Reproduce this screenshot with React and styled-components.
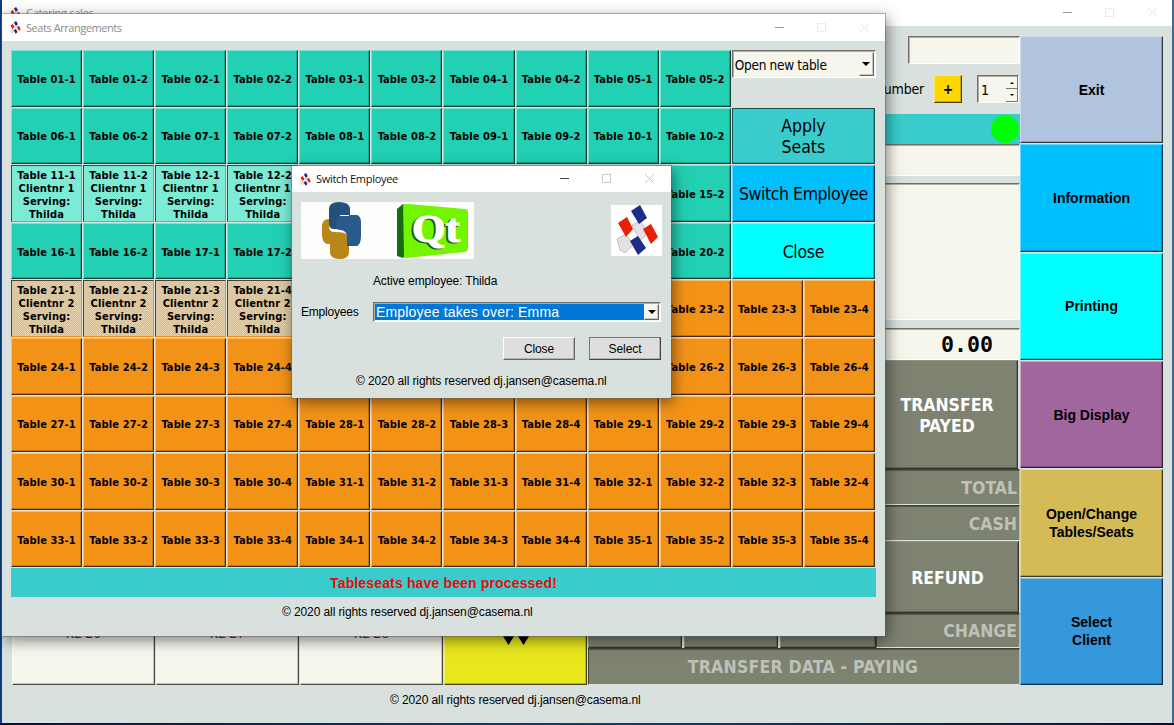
import React from "react";
import styled, { createGlobalStyle, css } from "styled-components";

const Global = createGlobalStyle`
  * { box-sizing: border-box; }
  body { margin: 0; overflow: hidden; font-family: "Liberation Sans", Arial, sans-serif; color: #000; }
`;

const tahoma = `"DejaVu Sans Condensed", "DejaVu Sans", sans-serif`;

const Desktop = styled.div`
  position: relative;
  width: 1174px;
  height: 725px;
  overflow: hidden;
  background: linear-gradient(90deg, #0a3f8c 0, #123a6c 2px, #073a66 60%, #3e6d93 100%);
  &::after {
    content: "";
    position: absolute;
    left: 0;
    right: 0;
    bottom: 0;
    height: 2px;
    background: linear-gradient(90deg, #07103c, #0a4474 50%, #06103a);
  }
`;

const Window = styled.section`
  position: absolute;
  left: ${(p) => p.$x}px;
  top: ${(p) => p.$y}px;
  width: ${(p) => p.$w}px;
  height: ${(p) => p.$h}px;
  display: flex;
  flex-direction: column;
  background: #d8e1de;
  box-shadow: ${(p) => (p.$shadow ? "0 0 0 1px rgba(90,100,100,.45), 2px 4px 14px rgba(0,0,0,.5)" : "none")};
`;

const TitleBar = styled.header`
  height: ${(p) => p.$h}px;
  flex: none;
  display: flex;
  align-items: center;
  padding: 0 ${(p) => p.$right}px 0 7px;
  gap: 4px;
  background: #fff;
  color: ${(p) => (p.$active ? "#111" : "#8b8b8b")};
  font: 11px/14px "Open Sans", "Noto Sans", sans-serif;
`;

const TitleText = styled.span`
  flex: 1;
  letter-spacing: ${(p) => p.$ls || 0}px;
  white-space: nowrap;
`;

const Controls = styled.svg`
  width: 98px;
  height: 12px;
  fill: none;
`;

function WindowControls({ active }) {
  return (
    <Controls viewBox="0 0 98 12">
      <path d="M1 5.5h9" stroke={active ? "#444" : "#999"} />
      <rect x="43.5" y="1.5" width="8" height="8" stroke={active ? "#ccc" : "#eaeaea"} />
      <path d="M86 1l9 9M95 1l-9 9" stroke={active ? "#ccc" : "#e4e4e4"} />
    </Controls>
  );
}

const Tiles = styled.svg`
  width: ${(p) => p.$size}px;
  height: ${(p) => p.$size}px;
  flex: none;
  display: block;
  background: #fff;
`;

function TileLogo({ size }) {
  return (
    <Tiles $size={size} viewBox={size < 20 ? "5 0 43 51" : "0 0 51 51"}>
      <g stroke="#8f9298" strokeWidth=".5">
        <path fill="#e2e2e5" d="M21 20l8-4 8 12-8 8z" />
        <path fill="#e2e2e5" d="M6 34l9-5 7 11-8 8-5-3z" />
      </g>
      <path fill="#1c2c8c" d="M20 6l9-6 7 13-8 6z" />
      <path fill="#e81e05" d="M7 18l9-6 6 12-7 8z" />
      <path fill="#e81e05" d="M32 24l8-5 7 13-7 7z" />
      <path fill="#1c2c8c" d="M19 36l8-5 8 12-8 7z" />
    </Tiles>
  );
}

const bevel = css`
  border: 1px solid;
  border-color: rgba(255, 255, 255, 0.4) rgba(0, 0, 0, 0.7) rgba(0, 0, 0, 0.7) rgba(255, 255, 255, 0.4);
  box-shadow: inset -1px -1px 0 rgba(0, 0, 0, 0.2);
`;

const sunken = css`
  border: 1px solid;
  border-color: #716e69 #fff #fff #716e69;
  box-shadow: inset 1px 1px 0 rgba(40, 40, 40, 0.35);
`;

const Button = styled.button`
  ${bevel}
  display: flex;
  align-items: center;
  justify-content: center;
  margin: 0;
  padding: 0;
  color: ${(p) => p.$fg || "#000"};
  background: ${(p) => p.$bg};
  white-space: pre-line;
  text-align: center;
  overflow: hidden;
`;

/* Main window */

const MainBody = styled.div`
  display: flex;
  height: 649px;
  margin: 10px 9px 0;
`;

const Products = styled.div`
  width: 577px;
  display: grid;
  grid-template-columns: repeat(4, 144px);
  grid-template-rows: repeat(6, 108.2px);
`;

const Product = styled(Button)`
  margin: 0 0 0 1px;
  padding-top: 3px;
  font: 14px ${tahoma};
  color: #444;
`;

const Receipt = styled.div`
  width: 432px;
  display: flex;
  flex-direction: column;
`;

const Line = styled.div`
  display: flex;
  justify-content: flex-end;
  align-items: center;
  height: ${(p) => p.$h}px;
  margin-bottom: ${(p) => p.$gap || 0}px;
`;

const Field = styled.div`
  ${sunken}
  width: ${(p) => (p.$w ? `${p.$w}px` : "100%")};
  height: 100%;
  background: #f7f6ec;
`;

const NumberLabel = styled.span`
  font: 14px ${tahoma};
  letter-spacing: -0.2px;
  margin-right: 10px;
`;

const PlusButton = styled(Button)`
  width: 28px;
  height: 28px;
  margin-right: 15px;
  font: bold 14px ${tahoma};
`;

const Spinner = styled(Field)`
  display: flex;
  justify-content: space-between;
  padding-left: 3px;
  margin-right: 1px;
  font: 14px/28px ${tahoma};
`;

const SpinButtons = styled.div`
  display: grid;
  grid-template-rows: 1fr 1fr;
  width: 12px;
`;

const SpinButton = styled.div`
  border-right: 1px solid #777;
  border-bottom: 1px solid #777;
  display: grid;
  place-items: center;
`;

const StatusLine = styled(Line)`
  background: #3acccc;
  padding-right: 1px;
`;

const Lamp = styled.span`
  width: 28px;
  height: 28px;
  border-radius: 50%;
  background: #0f0;
`;

const Amount = styled(Field)`
  text-align: right;
  padding-right: 26px;
  font: bold 21.6px/31px "DejaVu Sans Mono", monospace;
`;

const Register = styled.div`
  display: grid;
  grid-template-columns: 96px 96px 96px 144px;
  grid-template-rows: 109px 36px 36px 72px 35px 37px;
`;

const Key = styled(Button)`
  grid-row: ${(p) => p.$row};
  grid-column: ${(p) => p.$col};
  background: #7e8271;
  border-color: rgba(255, 255, 255, 0.15) #333 #333 rgba(255, 255, 255, 0.2);
  margin-right: ${(p) => p.$mr ?? 0}px;
  padding-top: 2px;
  color: #fff;
  font: bold 17.5px/21px ${tahoma};
`;

const Readout = styled.div`
  grid-row: ${(p) => p.$row};
  grid-column: ${(p) => p.$col || 4};
  background: #7e8271;
  border: 1px solid;
  border-color: #3f4239 #b9bbb0 #dfe3dd #3f4239;
  box-shadow: inset 0 1px 0 #55594d;
  display: flex;
  align-items: center;
  justify-content: ${(p) => (p.$center ? "center" : "flex-end")};
  padding: 2px 2px 0 0;
  color: #bfc1b8;
  font: bold 17.5px/21px ${tahoma};
  letter-spacing: ${(p) => (p.$center ? 0.23 : 0)}px;
`;

const Sidebar = styled.nav`
  display: grid;
  width: 143px;
  grid-template-rows: repeat(6, 1fr);
  row-gap: 1px;
`;

const SideButton = styled(Button)`
  font: bold 14px/18px "Liberation Sans", Arial, sans-serif;
`;

const Copyright = styled.footer`
  font-size: 12px;
  line-height: 14px;
  letter-spacing: -0.1px;
  white-space: nowrap;
  padding-left: ${(p) => p.$left}px;
  margin-top: ${(p) => p.$top}px;
`;

const menu = [
  ["Exit", "#b0c4de"],
  ["Information", "#00bfff"],
  ["Printing", "#00ffff"],
  ["Big Display", "#a2669f"],
  ["Open/Change\nTables/Seats", "#d4bb55"],
  ["Select\nClient", "#3498db"],
];

const Chevrons = styled.svg`
  width: 30px;
  height: 30px;
`;

function MainWindow() {
  return (
    <Window $x={2} $y={0} $w={1170} $h={723}>
      <TitleBar $h={26} $right={12}>
        <TileLogo size={13} />
        <TitleText $ls={-0.3}>Catering sales</TitleText>
        <WindowControls />
      </TitleBar>
      <MainBody>
        <Products>
          {Array.from({ length: 23 }, (_, i) => (
            <Product key={i} $bg="#f7f6ec">{i > 19 ? `KL-${i + 6}` : ""}</Product>
          ))}
          <Product $bg="#e8e71b">
            <Chevrons viewBox="0 0 30 30">
              <path d="M0 15h15l-7.500 12zM15 15h15l-7.500 12z" fill="#000" />
            </Chevrons>
          </Product>
        </Products>
        <Receipt>
          <Line $h={28} $gap={11}><Field $w={112} /></Line>
          <Line $h={28} $gap={11}>
            <NumberLabel>Number</NumberLabel>
            <PlusButton $bg="#ffd700">+</PlusButton>
            <Spinner $w={42}>
              1
              <SpinButtons>
                <SpinButton><svg width="4" height="3"><path d="M0 3l2-2 2 2z" /></svg></SpinButton>
                <SpinButton><svg width="4" height="3"><path d="M0 0l2 2 2-2z" /></svg></SpinButton>
              </SpinButtons>
            </Spinner>
          </Line>
          <StatusLine $h={30}><Lamp /></StatusLine>
          <Line $h={32} $gap={7}><Field /></Line>
          <Line $h={137} $gap={8}><Field /></Line>
          <Line $h={32}><Amount>0.00</Amount></Line>
          <Register>
            <Key $row={1} $col={4} $mr={2}>{"TRANSFER\nPAYED"}</Key>
            <Readout $row={2}>TOTAL</Readout>
            <Readout $row={3}>CASH</Readout>
            <Key $row={4} $col={4} $mr={1}>REFUND</Key>
            <Readout $row={5}>CHANGE</Readout>
            <Key $row={5} $col={1} $mr={2} />
            <Key $row={5} $col={2} $mr={2} />
            <Key $row={5} $col={3} />
            <Readout $row={6} $col="1 / 5" $center>TRANSFER DATA - PAYING</Readout>
          </Register>
        </Receipt>
        <Sidebar>
          {menu.map(([label, bg]) => (
            <SideButton key={label} $bg={bg}>{label}</SideButton>
          ))}
        </Sidebar>
      </MainBody>
      <Copyright $left={388} $top={8}>© 2020 all rights reserved dj.jansen@casema.nl</Copyright>
    </Window>
  );
}

/* Seats window */

const SeatGrid = styled.div`
  display: grid;
  grid-template-columns: repeat(12, 72.08px);
  grid-template-rows: repeat(9, 57.6px);
  margin: 9px 0 0 9px;
`;

const Seat = styled(Button)`
  margin: 0 1px 1px 0;
  padding-top: 2px;
  font: bold 11px/13px ${tahoma};
  letter-spacing: 0.12px;
  ${(p) => p.$busy && css`
    background: repeating-conic-gradient(${p.$busy[0]} 0 25%, ${p.$busy[1]} 0 50%) 0 0 / 2px 2px;
    border-color: rgba(0, 0, 0, 0.65) ${p.$bg} ${p.$bg} rgba(0, 0, 0, 0.65);
    box-shadow: none;
    padding-top: 3px;
  `}
`;

const ActionCell = styled.div`
  grid-column: 11 / 13;
  grid-row: ${(p) => p.$row};
  display: flex;
`;

const Action = styled(Button)`
  flex: 1;
  margin: 0 1px 1px 0;
  padding-top: 3px;
  font: 17.5px/21px ${tahoma};
  letter-spacing: ${(p) => p.$ls || 0}px;
  border-color: ${(p) => p.$focus && "#174f4f"};
`;

const Combo = styled.div`
  ${sunken}
  flex: 1;
  display: flex;
  align-items: center;
  height: ${(p) => p.$h}px;
  padding: ${(p) => p.$pad || "1px 1px 1px 2px"};
  background: #f7f6ec;
  font: 13.5px ${tahoma};
`;

const ComboText = styled.span`
  flex: 1;
  padding-top: 1px;
  letter-spacing: ${(p) => p.$ls || 0}px;
  white-space: nowrap;
`;

const Drop = styled.span`
  ${bevel}
  border-color: #f7f6ec #666 #666 #f7f6ec;
  align-self: stretch;
  width: 15px;
  display: grid;
  place-items: center;
  background: #f7f6ec;
`;

function DropArrow() {
  return (
    <Drop>
      <svg width="8" height="4"><path d="M0 0h8l-4 4z" /></svg>
    </Drop>
  );
}

const Notice = styled.div`
  width: 865px;
  height: 29px;
  margin-left: 9px;
  background: #3acccc;
  color: #f00808;
  text-align: center;
  font: bold 14px/30px "Liberation Sans", Arial, sans-serif;
  letter-spacing: 0.15px;
`;

const busyTints = { 1: ["#94ebd9", "#74e4cf"], 2: ["#e3cfa9", "#ecb978"] };

const pad = (n) => String(n).padStart(2, "0");
const seats = [];
for (let row = 0; row < 4; row++)
  for (let i = 0; i < 10; i++)
    seats.push({ name: `${pad(row * 5 + 1 + Math.floor(i / 2))}-${(i % 2) + 1}`, bg: "#22d0b3", client: row === 2 && i < 4 ? 1 : 0 });
for (let row = 0; row < 5; row++)
  for (let i = 0; i < 12; i++)
    seats.push({ name: `${21 + row * 3 + Math.floor(i / 4)}-${(i % 4) + 1}`, bg: "#f29318", client: row === 0 && i < 4 ? 2 : 0 });

function SeatsWindow() {
  return (
    <Window $x={2} $y={14} $w={883} $h={622} $shadow>
      <TitleBar $h={27} $right={13}>
        <TileLogo size={13} />
        <TitleText $ls={-0.45}>Seats Arrangements</TitleText>
        <WindowControls />
      </TitleBar>
      <SeatGrid>
        <ActionCell $row={1}>
          <Combo $h={28}><ComboText $ls={-0.3}>Open new table</ComboText><DropArrow /></Combo>
        </ActionCell>
        <ActionCell $row={2}><Action $bg="#3acccc" $focus>{"Apply\nSeats"}</Action></ActionCell>
        <ActionCell $row={3}><Action $bg="#00bfff" $ls={-0.42}>Switch Employee</Action></ActionCell>
        <ActionCell $row={4}><Action $bg="#00ffff" $ls={-0.3}>Close</Action></ActionCell>
        {seats.map((s) => (
          <Seat key={s.name} $bg={s.bg} $busy={busyTints[s.client]}>
            {`Table ${s.name}${s.client ? `\nClientnr ${s.client}\nServing:\nThilda` : ""}`}
          </Seat>
        ))}
      </SeatGrid>
      <Notice>Tableseats have been processed!</Notice>
      <Copyright $left={280} $top={8}>© 2020 all rights reserved dj.jansen@casema.nl</Copyright>
    </Window>
  );
}

/* Switch employee dialog */

const DialogBody = styled.div`
  padding: 10px 10px 0 9px;
  font-size: 12px;
  display: flex;
  flex-direction: column;
`;

const Logos = styled.div`
  display: flex;
  justify-content: space-between;
  align-items: center;
  height: 57px;
  margin-right: -1px;
`;

const Banner = styled.svg`
  width: 173px;
  height: 57px;
  background: #fdfdfc;
`;

const Active = styled.div`
  margin: 15px 0 0 72px;
  line-height: 14px;
  letter-spacing: -0.13px;
`;

const FormRow = styled.div`
  display: flex;
  align-items: center;
  margin-top: 14px;
`;

const FormLabel = styled.span`
  width: 72px;
  letter-spacing: -0.2px;
`;

const Selected = styled(ComboText)`
  background: #0078d7;
  color: #fff;
  font: 14px/15px "Liberation Sans", Arial, sans-serif;
  letter-spacing: 0.17px;
  padding: 1px 0 0 1px;
`;

const DialogButtons = styled.div`
  display: flex;
  justify-content: flex-end;
  gap: 14px;
  margin-top: 15px;
`;

const DialogButton = styled(Button)`
  width: 72px;
  height: 23px;
  padding-top: 1px;
  border-color: ${(p) => (p.$focus ? "#777 #444 #444 #777" : "#fff #666 #666 #fff")};
  font: 12px "Liberation Sans", Arial, sans-serif;
  letter-spacing: -0.1px;
`;

function LogoBanner() {
  return (
    <Banner viewBox="0 0 173 57">
      <path fill="#b98719" d="M28 17v8q0 5 6 5 9 0 11 2 3 2 3 7v11q0 7-9 7t-10-6v-9h-3q-5-2-5-9v-8q0-8 7-8z" />
      <path fill="#24507e" d="M28 7q0-7 10-7t11 6v11l-6 10h-10q-5 0-5-5z" />
      <path fill="#285b8c" d="M47 13h9q4 1 4 8v13q0 8-4 10H46v-9q0-4-3-6l-8-2v-5q0-8 6-8h6z" />
      <path d="M39 13.500h9M34 28.500h7" stroke="#fff" strokeWidth="1" />
      <path fill="#176b12" d="M96 7l6-5 3 2v49l-3 3-6-2z" />
      <path fill="#73f500" d="M102 3q2-1 5-1l57 5q3 0 3 3v36q0 4-4 4l-58 6q-3 0-2-4z" />
      <text x="109" y="41" fill="#16600d" stroke="#16600d" strokeWidth="1.2" fontFamily="Liberation Serif, serif" fontWeight="700" fontSize="39" textLength="48" lengthAdjust="spacingAndGlyphs">Qt</text>
      <text x="111" y="40" fill="#fff" stroke="#fff" strokeWidth="1.2" fontFamily="Liberation Serif, serif" fontWeight="700" fontSize="39" textLength="48" lengthAdjust="spacingAndGlyphs">Qt</text>
    </Banner>
  );
}

function SwitchDialog() {
  return (
    <Window $x={292} $y={166} $w={379} $h={232} $shadow>
      <TitleBar $h={26} $right={14} $active>
        <TileLogo size={13} />
        <TitleText $ls={-0.3}>Switch Employee</TitleText>
        <WindowControls active />
      </TitleBar>
      <DialogBody>
        <Logos><LogoBanner /><TileLogo size={51} /></Logos>
        <Active>Active employee: Thilda</Active>
        <FormRow>
          <FormLabel>Employees</FormLabel>
          <Combo $h={20} $pad="1px">
            <Selected>Employee takes over: Emma</Selected>
            <DropArrow />
          </Combo>
        </FormRow>
        <DialogButtons>
          <DialogButton $bg="#dedede">Close</DialogButton>
          <DialogButton $bg="#dedede" $focus>Select</DialogButton>
        </DialogButtons>
      </DialogBody>
      <Copyright $left={64} $top={14}>© 2020 all rights reserved dj.jansen@casema.nl</Copyright>
    </Window>
  );
}

export default function App() {
  return (
    <>
      <Global />
      <Desktop>
        <MainWindow />
        <SeatsWindow />
        <SwitchDialog />
      </Desktop>
    </>
  );
}
